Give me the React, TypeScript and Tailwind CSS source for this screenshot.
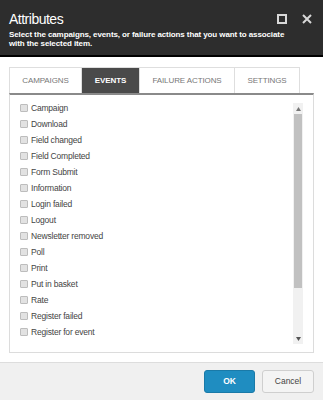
import React from "react";

const events = [
  "Campaign",
  "Download",
  "Field changed",
  "Field Completed",
  "Form Submit",
  "Information",
  "Login failed",
  "Logout",
  "Newsletter removed",
  "Poll",
  "Print",
  "Put in basket",
  "Rate",
  "Register failed",
  "Register for event",
];

const tabs = ["CAMPAIGNS", "EVENTS", "FAILURE ACTIONS", "SETTINGS"];
const tabWidths = ["w-[73px]", "w-[58px]", "w-[95px]", "w-[65px]"];

export default function App() {
  return (
    <div className="w-[323px] h-[400px] flex flex-col bg-white overflow-hidden" style={{ fontFamily: '"Liberation Sans", Arial, sans-serif' }}>
      <div className="h-[57px] bg-[#2d2d2d] border-b-2 border-black px-[9px] pt-[11px]">
        <div className="flex items-center">
          <h1 className="flex-1 text-white text-[14px] leading-[16px] tracking-[-0.5px]">Attributes</h1>
          <div className="flex gap-[15px] pr-[2px]">
            <div className="w-[10px] h-[10px] border-2 border-[#d8d8d8]" />
            <svg width="10" height="10" viewBox="0 0 10 10">
              <path d="M1 1 L9 9 M9 1 L1 9" stroke="#d8d8d8" strokeWidth="2" />
            </svg>
          </div>
        </div>
        <p className="text-white text-[8px] font-bold leading-[9px] mt-[3px] tracking-[-0.1px] max-w-[285px]">
          Select the campaigns, events, or failure actions that you want to associate with the selected item.
        </p>
      </div>

      <div className="flex-1 px-[9px] pt-[10px]">
        <div className="flex h-[26px]">
          {tabs.map((t, i) => (
            <div
              key={t}
              className={`${tabWidths[i]} flex items-center justify-center text-[8px] tracking-[-0.1px] border-t border-r border-[#dedede] ${i === 0 ? "border-l" : ""} ${i === 1 ? "bg-[#4a4a4a] text-white font-bold border-[#4a4a4a]" : "text-[#777]"}`}
            >
              {t}
            </div>
          ))}
        </div>
        <div className="h-[260px] border border-[#dcdcdc] border-t-2 border-t-[#8a8a8a] flex pl-[10px] pr-[10px] pt-[8px] pb-[8px]">
          <div className="flex-1 flex flex-col -mt-[3px]">
            {events.map((e) => (
              <div key={e} className="h-[16px] flex items-center gap-[3px]">
                <div className="w-[8px] h-[8px] rounded-[1px] border border-[#bdbdbd] bg-[#e2e2e2]" />
                <span className="text-[8.5px] tracking-[-0.2px] text-[#444]">{e}</span>
              </div>
            ))}
          </div>
          <div className="w-[10px] bg-[#f1f1f1] flex flex-col items-center">
            <div className="h-[11px] flex items-center justify-center">
              <svg width="5" height="4" viewBox="0 0 5 4"><path d="M2.5 0 L5 4 L0 4 Z" fill="#777" /></svg>
            </div>
            <div className="w-[8px] h-[174px] bg-[#c1c1c1]" />
            <div className="flex-1" />
            <div className="h-[11px] flex items-center justify-center">
              <svg width="5" height="4" viewBox="0 0 5 4"><path d="M0 0 L5 0 L2.5 4 Z" fill="#555" /></svg>
            </div>
          </div>
        </div>
      </div>

      <div className="h-[38px] bg-[#f0f0f0] border-t border-[#dddddd] flex items-center justify-end gap-[7px] pr-[9px]">
        <button className="w-[51px] h-[23px] rounded-[3px] bg-[#1f8dc1] border border-[#1a7aa8] text-white text-[8.5px] font-bold">OK</button>
        <button className="w-[52px] h-[23px] rounded-[3px] bg-[#f4f4f4] border border-[#cfcfcf] text-[#444] text-[8.5px]">Cancel</button>
      </div>
    </div>
  );
}
